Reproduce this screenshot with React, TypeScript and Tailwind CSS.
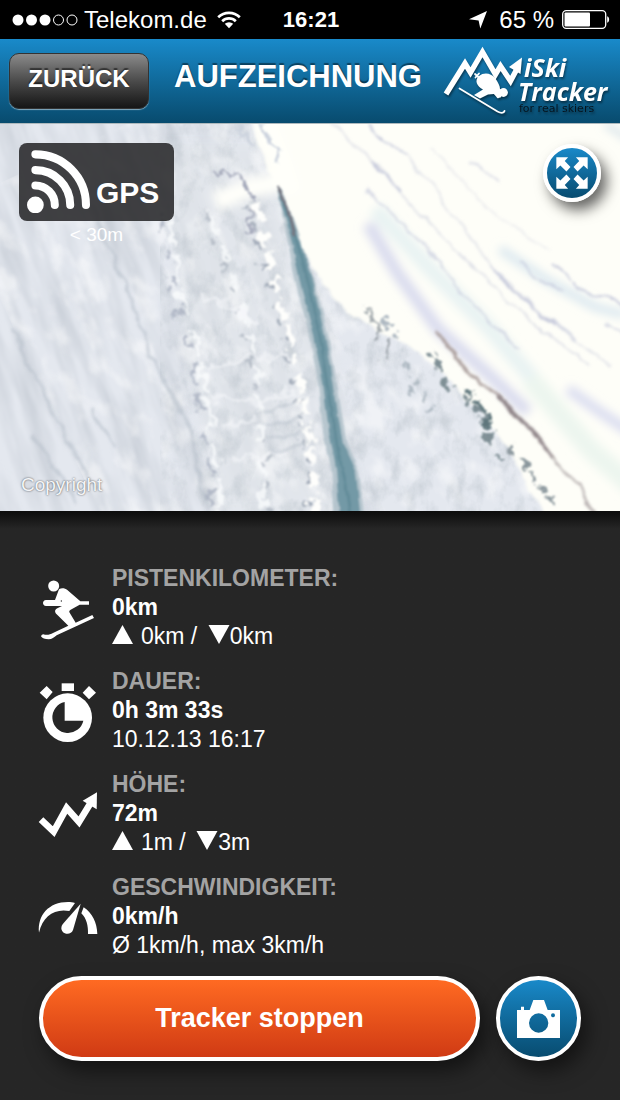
import type { ReactNode } from 'react';

const StatusBar = () => (
  <div className="grid h-[39px] shrink-0 grid-cols-[1fr_auto_1fr] items-center bg-black pl-3 pr-[10px] text-2xl leading-none text-white">
    <div className="flex items-center gap-[6px]">
      <svg className="h-3 w-[66px]" viewBox="0 0 66 12" fill="white">
        <circle cx="6" cy="6" r="5.5" />
        <circle cx="19.5" cy="6" r="5.5" />
        <circle cx="33" cy="6" r="5.5" />
        <circle cx="46.5" cy="6" r="5" fill="none" stroke="white" />
        <circle cx="60" cy="6" r="5" fill="none" stroke="white" />
      </svg>
      <span>Telekom.de</span>
      <svg className="ml-1 h-[18px] w-6" viewBox="0 0 24 18" fill="none" stroke="white" strokeWidth="2.7">
        <path d="M1.2 6.2a15.5 15.5 0 0 1 21.6 0" />
        <path d="M5.2 10.2a9.8 9.8 0 0 1 13.6 0" />
        <path d="M12 17.2l-4.2-4.4a6.2 6.2 0 0 1 8.4 0z" fill="white" stroke="none" />
      </svg>
    </div>
    <span className="text-[22px] font-bold">16:21</span>
    <div className="flex items-center justify-end gap-2">
      <svg className="mr-1 h-[18px] w-[18px]" viewBox="0 0 18 18" fill="white">
        <path d="M18 0L11.3 17.4 9.6 9.5 0 8.2z" />
      </svg>
      <span>65 %</span>
      <svg className="h-[19px] w-12" viewBox="0 0 48 19">
        <rect x="0.7" y="0.7" width="43" height="17.6" rx="3.5" fill="none" stroke="white" strokeWidth="1.3" />
        <rect x="2.5" y="2.5" width="25.5" height="14" rx="1" fill="white" />
        <path d="M45.2 6.3c2.6.6 2.6 5.8 0 6.4z" fill="white" />
      </svg>
    </div>
  </div>
);

const Logo = () => (
  <svg
    className="h-[72px] w-[166px] shrink-0 drop-shadow-[1px_2px_1px_rgba(0,0,0,0.45)]"
    viewBox="0 0 166 72"
    role="img"
    aria-label="iSki Tracker"
  >
    <path
      d="M3 49L22 18.5 27.5 27.5 39.5 7 52.500 29.500 57.500 21 67.500 36 75.500 21"
      fill="none"
      stroke="white"
      strokeWidth="5.4"
    />
    <path d="M79 12.500L66 22l11.500 7z" fill="white" />
    <path d="M36 31c5-4 12-3 16 2 3 4 5 8 5 11l3.500 1.500-.5 4-3 3.500-6-4-6 .5-8 4-6-3.500 9-5.500c-6-3-9-9-4-13.500z" fill="white" />
    <path d="M51 47l4 5" stroke="white" strokeWidth="2.500" strokeLinecap="round" />
    <circle cx="60.500" cy="47.500" r="4.400" fill="white" />
    <path
      d="M16.500 43.500l38 23c3 1.600 6.500 2 7-.5M32 29l5.500 5M32.500 32.500l3.500-4"
      fill="none"
      stroke="white"
      strokeWidth="1.800"
      strokeLinecap="round"
    />
    <text x="81" y="32" fill="white" className="font-['Open_Sans',sans-serif] text-[25px] font-bold italic">
      iSki
    </text>
    <text x="75" y="56" fill="white" className="font-['Open_Sans',sans-serif] text-[25px] font-bold italic">
      Tracker
    </text>
    <text x="76" y="67" fill="#06151f" className="font-['DejaVu_Sans',sans-serif] text-[11px]">
      for real skiers
    </text>
  </svg>
);

const Header = () => (
  <header className="flex h-[85px] shrink-0 items-center border-b border-[#aeb9bd] bg-linear-to-b from-[#198aca] to-[#084b6e] pl-[9px] pr-[11px]">
    <button
      type="button"
      className="h-14 w-[140px] shrink-0 rounded-[10px] border border-[#333] bg-linear-to-b from-[#8b8b8b] via-[#4b4b4b] to-[#161616] pb-1 text-2xl font-bold text-white shadow-[0_1px_1px_rgba(255,255,255,0.5)] text-shadow-[0_-2px_1px_rgba(0,0,0,0.5)]"
    >
      ZURÜCK
    </button>
    <h1 className="flex-1 pb-2 pl-1 text-center text-[31px] font-bold leading-10 text-white text-shadow-[0_-2px_1px_rgba(0,0,0,0.45)]">
      AUFZEICHNUNG
    </h1>
    <Logo />
  </header>
);

// Winter aerial view: slope, ridges and the stream running down the middle.
const Terrain = () => (
  <svg className="absolute inset-0 h-full w-full" viewBox="0 0 620 387" preserveAspectRatio="xMidYMid slice" aria-hidden="true">
    <defs>
      <filter id="streaks" x="0" y="0" width="100%" height="100%">
        <feTurbulence type="fractalNoise" baseFrequency="0.05 0.008" numOctaves="4" seed="7" />
        <feColorMatrix values="0 0 0 0 0.54  0 0 0 0 0.58  0 0 0 0 0.64  1.700 0 0 0 -0.66" />
        <feGaussianBlur stdDeviation="0.8" />
      </filter>
      <filter id="grain" x="0" y="0" width="100%" height="100%">
        <feTurbulence type="fractalNoise" baseFrequency="0.06 0.045" numOctaves="4" seed="12" />
        <feColorMatrix values="0 0 0 0 0.5  0 0 0 0 0.55  0 0 0 0 0.6  2.600 0 0 0 -1.150" />
        <feGaussianBlur stdDeviation="0.7" />
      </filter>
      <filter id="glints" x="0" y="0" width="100%" height="100%">
        <feTurbulence type="fractalNoise" baseFrequency="0.05 0.03" numOctaves="4" seed="31" />
        <feColorMatrix values="0 0 0 0 1  0 0 0 0 1  0 0 0 0 1  4 0 0 0 -2" />
        <feGaussianBlur stdDeviation="0.9" />
      </filter>
      <filter id="rough" x="-20%" y="-20%" width="140%" height="140%">
        <feTurbulence type="fractalNoise" baseFrequency="0.09" numOctaves="3" seed="3" />
        <feDisplacementMap in="SourceGraphic" scale="20" xChannelSelector="R" yChannelSelector="G" />
        <feGaussianBlur stdDeviation="1.300" />
      </filter>
      <filter id="soft" x="-20%" y="-20%" width="140%" height="140%">
        <feTurbulence type="fractalNoise" baseFrequency="0.04" numOctaves="3" seed="5" />
        <feDisplacementMap in="SourceGraphic" scale="12" xChannelSelector="R" yChannelSelector="G" />
        <feGaussianBlur stdDeviation="1.800" />
      </filter>
      <filter id="haze" x="-20%" y="-20%" width="140%" height="140%">
        <feGaussianBlur stdDeviation="5" />
      </filter>
      <filter id="edge">
        <feTurbulence type="fractalNoise" baseFrequency="0.05" numOctaves="2" seed="9" />
        <feDisplacementMap in="SourceGraphic" scale="5" xChannelSelector="R" yChannelSelector="G" />
        <feGaussianBlur stdDeviation="0.9" />
      </filter>
      <mask id="slope" maskUnits="userSpaceOnUse" x="0" y="0" width="620" height="387">
        <path
          d="M-30-30H244L270 50 302 130 345 188 378 205 424 232 474 284 508 322 560 420H-30z"
          fill="white"
          filter="url(#soft)"
        />
      </mask>
    </defs>

    <rect width="620" height="387" fill="#fefef8" />
    <g mask="url(#slope)">
      <rect width="620" height="387" fill="#e4e8ef" />
      <g transform="rotate(-19 200 190)">
        <rect x="-150" y="-250" width="460" height="900" filter="url(#streaks)" />
      </g>
      <path d="M160 20h100l70 170 30 197H215L178 170z" fill="#e2e6eb" opacity="0.7" filter="url(#haze)" />
      <path d="M160 0l100 0 90 180 80 40 130 170H215z" filter="url(#grain)" opacity="0.5" />
      <g transform="rotate(-25 300 250)">
        <rect x="60" y="-50" width="420" height="600" filter="url(#glints)" opacity="0.45" />
      </g>
    </g>

    <g fill="none" filter="url(#haze)">
      <path d="M262-10l20 50 10 30" stroke="#fffffa" strokeWidth="20" />
      <path d="M215 78l35-14 38-8" stroke="#fffffa" strokeWidth="20" />
      <path d="M368 100l30 50 40 55 50 45 40 38" stroke="#d8daee" strokeWidth="12" />
      <path d="M375 85l55 60 60 60 60 70" stroke="#e9f3f3" strokeWidth="16" />
      <path d="M500 125l45 30 50 28 30 8" stroke="#d8e6ef" strokeWidth="8" />
      <path d="M568 265l32 23 30 20" stroke="#d9dcf0" strokeWidth="10" />
      <path d="M530 255l60 70 45 40" stroke="#edf6ef" strokeWidth="20" />
      <path d="M605 0l25 16" stroke="#cfdde6" strokeWidth="5" />
    </g>

    <g fill="none" stroke="#bfc3d8" strokeWidth="1.800" filter="url(#soft)">
      <path d="M330 0l50 45 40 45 60 60 50 45 60 48" opacity="0.5" />
      <path d="M368 0l38 32M370 38l30 28" />
      <path d="M406 32l50 60 35 50 60 55 60 45" opacity="0.45" />
      <path d="M490 142l30 30 35 30" />
      <path d="M365 65l60 55 45 60 50 45" opacity="0.65" />
      <path d="M430 25l60 60 60 42" opacity="0.3" />
      <path d="M470 38l28 22" opacity="0.6" />
      <path d="M520 140l40 30" opacity="0.7" />
      <path d="M550 140l30 24 45 18" />
      <path d="M550 195l25 18M605 200l20 14" opacity="0.7" />
    </g>

    <g fill="none" filter="url(#rough)">
      <path d="M160 92l8 35 4 45 14 38 12 60 10 60 6 70" stroke="#a9b0c0" strokeWidth="4" strokeDasharray="14 17" opacity="0.8" />
      <path d="M168 92l8 35 4 45 14 38 12 60 10 60 6 70" stroke="#f9fbfd" strokeWidth="5" strokeDasharray="30 8" opacity="0.85" />
      <path d="M206 92l30 80 18 90 12 60 4 70" stroke="#aeb5c1" strokeWidth="4" strokeDasharray="6 19" opacity="0.8" />
      <path d="M211 92l30 80 18 90 2 60 4 70" stroke="#f9fbfc" strokeWidth="6" strokeDasharray="18 13" opacity="0.8" />
      <path d="M250 80l12 60 20 65 14 70 12 80 0 35" stroke="#a3acb9" strokeWidth="4" strokeDasharray="5 15" />
      <path d="M257 80l12 60 20 65 14 70 12 80 0 35" stroke="#fefefc" strokeWidth="8" strokeDasharray="17 8" />
      <path d="M200 170l38 14 22 20M205 245l50-15 36 4M210 270l46 8 36-10M222 305l35-12M230 335l55-6" stroke="#f5f7fa" strokeWidth="5" opacity="0.6" />
      <path d="M215 46l24 6 16 26M254 85l-6 24" stroke="#a3a7b9" strokeWidth="3" />
      <path d="M235 0l18 22M262 0l18 38" stroke="#ccd3de" strokeWidth="4" />
    </g>

    <g fill="none" stroke="#b4bdc8" strokeWidth="2.500" filter="url(#soft)" opacity="0.6">
      <path d="M12 205l30 60 25 50 30 50M32 310l45 70M90 285l25 40M90 80l35 80 25 70 30 60M165 255l25 50 18 82M262 290l35-12M265 303l38-12M269 317l36-11M272 329l36-10" />
    </g>

    <g fill="none" filter="url(#rough)">
      <path d="M366 186l14 14-4 14M390 216l-6 20" stroke="#8e979d" strokeWidth="5" opacity="0.8" />
      <path d="M434 232l8 22 16 16 24 18 8 28 10 22" stroke="#7f8f95" strokeWidth="5" strokeDasharray="15 9" />
      <path d="M464 266l22 20 2 22" stroke="#5f767c" strokeWidth="5" strokeDasharray="11 6" />
      <path d="M510 322l18 25 26 28" stroke="#8b979d" strokeWidth="4" strokeDasharray="12 4" />
      <path d="M408 264l24 16M385 195l18 30M404 240l30 45" stroke="#adb8c1" strokeWidth="4" strokeDasharray="7 10" />
    </g>
    <path d="M437 208l33 42 33 25" fill="none" stroke="#a99c9a" strokeWidth="3" filter="url(#soft)" />
    <path d="M498 272l28 28 28 37" fill="none" stroke="#8f8488" strokeWidth="4" filter="url(#soft)" />
    <path d="M552 334l28 29 14 28" fill="none" stroke="#b5aeae" strokeWidth="2.500" filter="url(#soft)" />

    <g filter="url(#edge)">
      <path
        d="M276 62c3-1 7 4 10 12l13 38 13 38 12 42 10 50 8 48 5 30 12 28 6 50h-30l-4-54-8-37-5-48-8-46-12-44-10-50z"
        fill="#a8bbc4"
        opacity="0.75"
      />
      <path
        d="M277 63c3 1 6 6 8 13l14 40 12 36 10 42 10 48 7 48 5 30 13 29 5 48h-21l-4-52-7-38-6-48-9-47-12-45-10-48z"
        fill="#7399a6"
      />
      <path d="M283 76l14 42 14 55 11 50 9 55 7 50 8 32 6 47" fill="none" stroke="#55818f" strokeWidth="3" opacity="0.55" />
      <path d="M277 62l10 20 7 30" fill="none" stroke="#77757f" strokeWidth="3" />
    </g>
  </svg>
);

const ExpandIcon = () => (
  <svg className="h-8 w-8" viewBox="737 95 95 95" fill="white" aria-hidden="true">
    <path d="M738 96h35l-10 11 17 18-12 13-18-18-12 11z" />
    <path d="M831 96h-35l10 11-17 18 12 13 18-18 12 11z" />
    <path d="M738 189h35l-10-11 17-18-12-13-18 18-12-11z" />
    <path d="M831 189h-35l10-11-17-18 12-13 18 18 12-11z" />
  </svg>
);

const MapView = () => (
  <section className="relative min-h-60 flex-1 overflow-hidden">
    <Terrain />
    <div className="absolute left-[19px] top-[19px] text-center text-white">
      <div className="flex h-[78px] w-[155px] items-end gap-[6px] rounded-lg bg-[#2c2c2f]/90 px-2 pb-2">
        <svg className="h-[63px] w-[63px]" viewBox="80 77 188 188" fill="none" stroke="white" strokeWidth="24" strokeLinecap="round" aria-hidden="true">
          <circle cx="105" cy="241" r="25" fill="white" stroke="none" />
          <path d="M105 90a151 151 0 0 1 151 151M105 137a104 104 0 0 1 104 104M105 183a58 58 0 0 1 58 58" />
        </svg>
        <span className="text-[30px] font-bold leading-10">GPS</span>
      </div>
      <p className="text-[19px] leading-7">&lt; 30m</p>
    </div>
    <button
      type="button"
      aria-label="Vollbild"
      className="absolute right-[19px] top-5 flex h-[58px] w-[58px] items-center justify-center rounded-full border-4 border-white bg-linear-to-b from-[#1989c9] to-[#084c70] shadow-[6px_8px_14px_rgba(0,0,0,0.6)]"
    >
      <ExpandIcon />
    </button>
    <a
      href="#copyright"
      className="absolute bottom-3 left-[21px] text-[19px] leading-7 text-[#f4f5f7] text-shadow-[0_0_2px_rgba(0,0,0,0.7)]"
    >
      Copyright
    </a>
  </section>
);

const SkiIcon = () => (
  <svg className="h-[60px] w-[60px] shrink-0" viewBox="57 54 180 180" fill="white" overflow="visible" aria-hidden="true">
    <circle cx="101" cy="78" r="16.500" />
    <path d="M117 88c8-5 18-3 25 2l39 34h26v10h-28l-27 15c-5 3-5 6-3 9l18 30 50-23 5 9-112 52c-8 7-14 12-24 12-11 0-20-3-23-9 2-7 7-8 12-5 9 2 17-2 24-5l46-22-35-34c-7-7-6-14 2-18l14-7H78c-12 0-12-18 0-18h27z" />
    <circle cx="124" cy="123" r="2" fill="#262626" />
  </svg>
);

const StopwatchIcon = () => (
  <svg className="h-[60px] w-[60px] shrink-0" viewBox="57 363 180 180" fill="white" overflow="visible" aria-hidden="true">
    <rect x="125" y="370" width="37" height="23" />
    <path d="M80 378l18 18-18 22-21-20zM207 378l21 20-21 20-19-20z" />
    <circle cx="143" cy="473" r="73" />
    <path d="M134 426v56h56a47 47 0 1 1-56-56z" fill="#262626" />
  </svg>
);

const HeightIcon = () => (
  <svg className="h-[60px] w-[60px] shrink-0" viewBox="57 72 180 180" fill="none" stroke="white" overflow="visible" aria-hidden="true">
    <path d="M63 179l38 36 39-71 37 42 38-62" strokeWidth="20" />
    <path d="M231 97l-43 25 42 26z" fill="white" stroke="none" />
  </svg>
);

const SpeedIcon = () => (
  <svg className="h-[60px] w-[60px] shrink-0" viewBox="57 381 180 180" fill="white" overflow="visible" aria-hidden="true">
    <path d="M57 518c-5-52 29-92 87-92 8 0 14 1 21 3l-17 24c-44-9-80 16-91 65z" />
    <path d="M182 431l-23 79c-5 14-23 14-31 5-7-9-4-18 3-26z" />
    <path d="M191 442c26 17 40 46 41 80h-28c1-24-5-48-20-62z" />
  </svg>
);

const Up = () => (
  <svg className="mr-2 inline h-[19px] w-[21px] align-baseline" viewBox="0 0 21 19" fill="white" role="img" aria-label="aufwärts">
    <path d="M10.500 0L21 19H0z" />
  </svg>
);

const Down = () => (
  <svg className="ml-1 inline h-[19px] w-[22px] align-baseline" viewBox="0 0 21 19" fill="white" role="img" aria-label="abwärts">
    <path d="M0 0h21L10.500 19z" />
  </svg>
);

interface StatProps {
  icon: ReactNode;
  label: string;
  value: string;
  children: ReactNode;
}

const Stat = ({ icon, label, value, children }: StatProps) => (
  <div className="flex items-center gap-[13px]">
    {icon}
    <dl className="text-[23px] leading-[29px] text-white">
      <dt className="font-bold text-[#a3a3a3]">{label}</dt>
      <dd className="font-bold">{value}</dd>
      <dd>{children}</dd>
    </dl>
  </div>
);

const App = () => {
  return (
    <div className="flex min-h-screen flex-col bg-[#262626] font-['Liberation_Sans',Arial,sans-serif]">
      <StatusBar />
      <Header />
      <MapView />
      <main className="shrink-0 bg-linear-to-b from-[#0c0c0c] to-[#262626] to-[18px] px-[39px] pb-[39px] pt-[53px]">
        <div className="flex flex-col gap-4">
          <Stat icon={<SkiIcon />} label="PISTENKILOMETER:" value="0km">
            <Up />0km / <Down />0km
          </Stat>
          <Stat icon={<StopwatchIcon />} label="DAUER:" value="0h 3m 33s">
            10.12.13 16:17
          </Stat>
          <Stat icon={<HeightIcon />} label="HÖHE:" value="72m">
            <Up />1m / <Down />3m
          </Stat>
          <Stat icon={<SpeedIcon />} label="GESCHWINDIGKEIT:" value="0km/h">
            Ø 1km/h, max 3km/h
          </Stat>
        </div>
        <div className="mt-4 flex gap-4">
          <button
            type="button"
            className="h-[85px] flex-1 rounded-full border-4 border-white bg-linear-to-b from-[#ff6a22] to-[#d03a14] text-[27px] font-bold text-white shadow-[6px_10px_20px_rgba(0,0,0,0.5)]"
          >
            Tracker stoppen
          </button>
          <button
            type="button"
            aria-label="Foto aufnehmen"
            className="flex h-[85px] w-[85px] items-center justify-center rounded-full border-4 border-white bg-linear-to-b from-[#1989c9] to-[#084c70] shadow-[6px_10px_20px_rgba(0,0,0,0.5)]"
          >
            <svg className="h-[38px] w-[43px]" viewBox="351 117 129 114" fill="white" aria-hidden="true">
              <path
                fillRule="evenodd"
                d="M351 147h12v-10h9v10h17l11-30h32l11 30h37v84H351zM416 157a29 29 0 1 0 0 58 29 29 0 0 0 0-58zM459 157a6 6 0 1 0 0 12 6 6 0 0 0 0-12z"
              />
            </svg>
          </button>
        </div>
      </main>
    </div>
  );
};

export default App;
